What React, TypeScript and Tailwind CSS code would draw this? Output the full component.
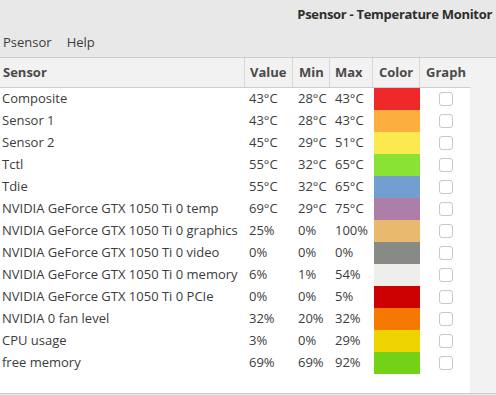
const rows = [
    { name: 'Composite', value: '43°C', min: '28°C', max: '43°C', color: 'bg-[#ef2929]' },
    { name: 'Sensor 1', value: '43°C', min: '28°C', max: '43°C', color: 'bg-[#fcaf3e]' },
    { name: 'Sensor 2', value: '45°C', min: '29°C', max: '51°C', color: 'bg-[#fce94f]' },
    { name: 'Tctl', value: '55°C', min: '32°C', max: '65°C', color: 'bg-[#8ae234]' },
    { name: 'Tdie', value: '55°C', min: '32°C', max: '65°C', color: 'bg-[#729fcf]' },
    { name: 'NVIDIA GeForce GTX 1050 Ti 0 temp', value: '69°C', min: '29°C', max: '75°C', color: 'bg-[#ad7fa8]' },
    { name: 'NVIDIA GeForce GTX 1050 Ti 0 graphics', value: '25%', min: '0%', max: '100%', color: 'bg-[#e9b96e]' },
    { name: 'NVIDIA GeForce GTX 1050 Ti 0 video', value: '0%', min: '0%', max: '0%', color: 'bg-[#888a85]' },
    { name: 'NVIDIA GeForce GTX 1050 Ti 0 memory', value: '6%', min: '1%', max: '54%', color: 'bg-[#eeeeec]' },
    { name: 'NVIDIA GeForce GTX 1050 Ti 0 PCIe', value: '0%', min: '0%', max: '5%', color: 'bg-[#cc0000]' },
    { name: 'NVIDIA 0 fan level', value: '32%', min: '20%', max: '32%', color: 'bg-[#f57900]' },
    { name: 'CPU usage', value: '3%', min: '0%', max: '29%', color: 'bg-[#edd400]' },
    { name: 'free memory', value: '69%', min: '69%', max: '92%', color: 'bg-[#73d216]' },
]

const cols = 'grid grid-cols-[245px_48px_37px_43px_47px_50px]'

export default function App() {
    return (
        <div className="flex h-[395px] w-[496px] flex-col overflow-hidden bg-[#e8e8e8] font-['Open_Sans',sans-serif] text-[13px] text-[#3c3c3c]">
            <div className="flex h-[29px] items-center justify-end pr-[4px]">
                <span className="text-[13px] font-bold tracking-[-0.3px] text-[#2e2e2e]">
                    Psensor - Temperature Monitor
                </span>
            </div>
            <div className="flex h-[28px] items-center gap-[15px] px-[3px] text-[#3c3c3c]">
                <span>Psensor</span>
                <span>Help</span>
            </div>

            <div className="flex flex-1 border-y border-[#cdcdcd] bg-[#f2f2f2]">
                <div className="flex w-[470px] flex-col bg-white">
                    <div className={`${cols} h-[30px] border-b border-[#cdcdcd] bg-[#f2f2f2] font-bold text-[#4a4a4a]`}>
                        <div className="flex items-center border-r border-[#d6d6d6] pl-[3px]">Sensor</div>
                        <div className="flex items-center border-r border-[#d6d6d6] pl-[5px]">Value</div>
                        <div className="flex items-center border-r border-[#d6d6d6] pl-[6px]">Min</div>
                        <div className="flex items-center border-r border-[#d6d6d6] pl-[5px]">Max</div>
                        <div className="flex items-center border-r border-[#d6d6d6] pl-[6px]">Color</div>
                        <div className="flex items-center pl-[6px]">Graph</div>
                    </div>
                    {rows.map((row) => (
                        <div key={row.name} className={`${cols} h-[22px] items-center`}>
                            <div className="whitespace-nowrap pl-[2px]">{row.name}</div>
                            <div className="pl-[4px]">{row.value}</div>
                            <div className="pl-[5px]">{row.min}</div>
                            <div className="pl-[5px]">{row.max}</div>
                            <div className={`ml-[1px] h-[22px] ${row.color}`} />
                            <div className="flex justify-center pl-[1px]">
                                <div className="h-[14px] w-[14px] rounded-[3px] border border-[#c8c8c8] bg-white" />
                            </div>
                        </div>
                    ))}
                </div>
            </div>
            <div className="h-[1px]" />
        </div>
    )
}
